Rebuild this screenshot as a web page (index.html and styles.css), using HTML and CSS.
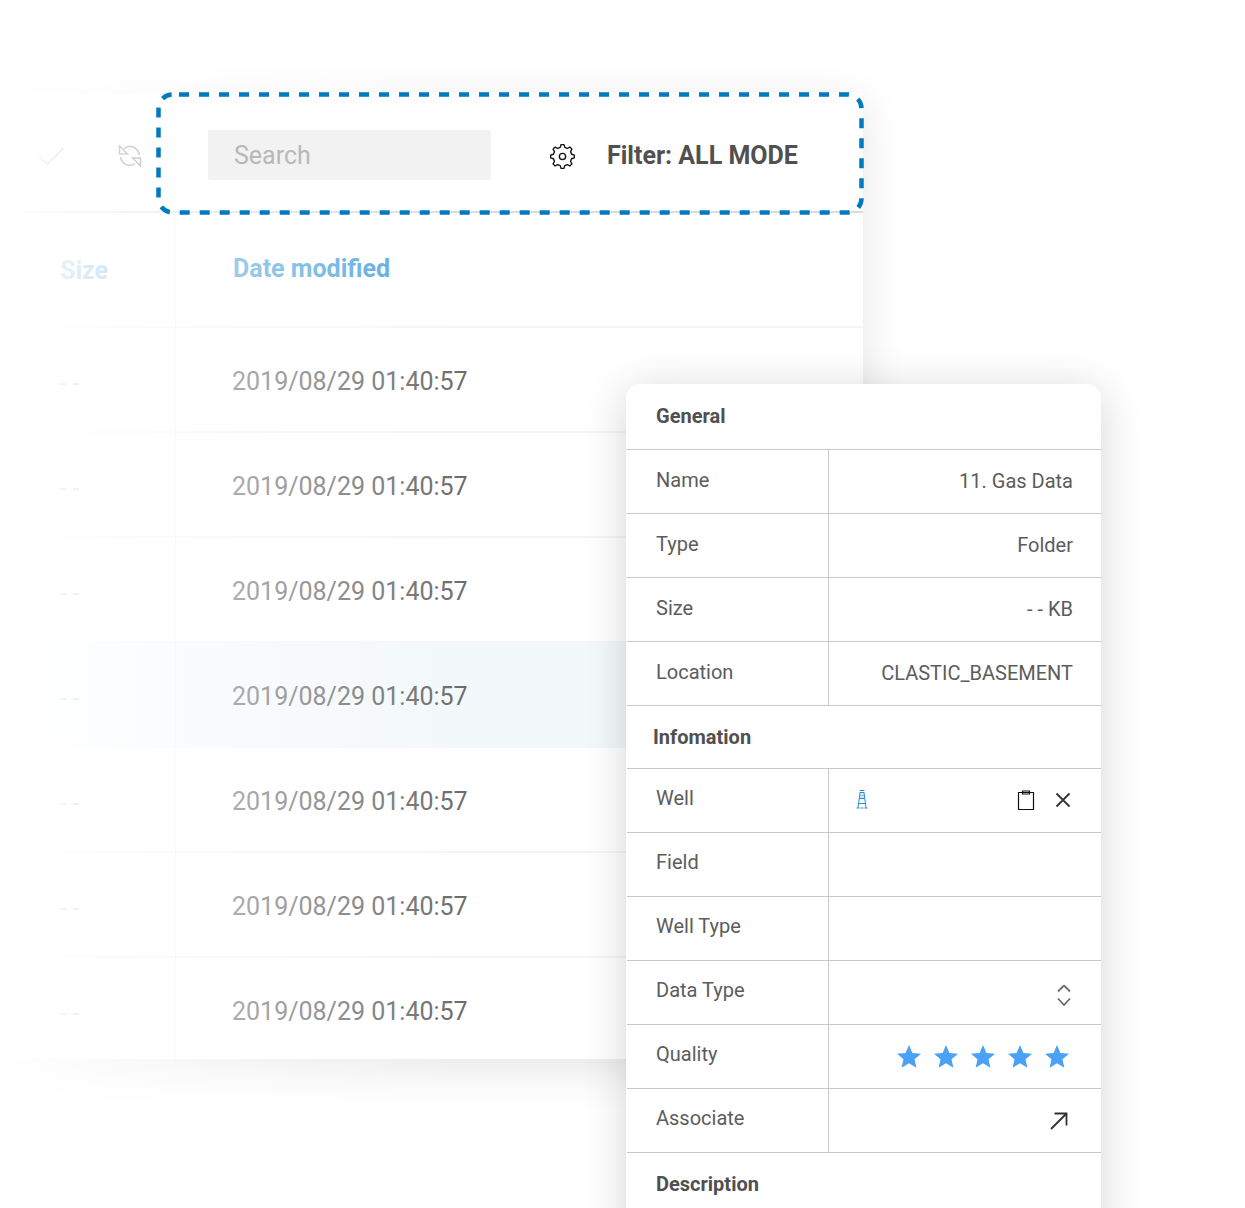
FILE: index.html
```html
<!DOCTYPE html>
<html lang="en">
<head>
<meta charset="utf-8">
<title>File details</title>
<link rel="stylesheet" href="styles.css">
</head>
<body>
<div class="stage">
  <section class="card">
    <div class="toolbar">
      <svg class="ico-check" width="28" height="20" viewBox="0 0 28 20"><path d="M3.300 9.700l8 7.600 16-16"/></svg>
      <svg class="ico-refresh" width="24" height="24" viewBox="0 0 24 24"><path d="M6 4.800C11 .5 19 1.500 21.500 11M2.500 13C4 20 11 24 17 19.500"/><path d="M1.500 2v8h8zM22.500 22v-8h-8z"/></svg>
      <div class="search">Search</div>
      <svg class="ico-gear" width="25" height="25" viewBox="0 0 24 24"><polygon points="9.82,3.27 10.6,.59 13.4,.59 14.18,3.27 16.64,4.29 19.08,2.94 21.06,4.92 19.71,7.36 20.73,9.82 23.41,10.6 23.41,13.4 20.73,14.18 19.71,16.64 21.06,19.08 19.08,21.06 16.64,19.71 14.18,20.73 13.4,23.41 10.6,23.41 9.82,20.73 7.36,19.71 4.92,21.06 2.94,19.08 4.29,16.64 3.27,14.18 .59,13.4 .59,10.6 3.27,9.82 4.29,7.36 2.94,4.92 4.92,2.94 7.36,4.29"/><circle cx="12" cy="12" r="3"/></svg>
      <div class="filter">Filter: ALL MODE</div>
    </div>
    <div class="row head"><div class="c-size"><span class="size-title">Size</span></div><div class="c-date date-title">Date modified</div></div>
    <div class="row"><div class="c-size dash">- -</div><div class="c-date">2019/08/29 01:40:57</div></div>
    <div class="row"><div class="c-size dash">- -</div><div class="c-date">2019/08/29 01:40:57</div></div>
    <div class="row"><div class="c-size dash">- -</div><div class="c-date">2019/08/29 01:40:57</div></div>
    <div class="row selected"><div class="c-size dash">- -</div><div class="c-date">2019/08/29 01:40:57</div></div>
    <div class="row"><div class="c-size dash">- -</div><div class="c-date">2019/08/29 01:40:57</div></div>
    <div class="row"><div class="c-size dash">- -</div><div class="c-date">2019/08/29 01:40:57</div></div>
    <div class="row last"><div class="c-size dash">- -</div><div class="c-date">2019/08/29 01:40:57</div></div>
  </section>

  <div class="fade"></div>

  <svg class="marquee" width="720" height="136" viewBox="0 0 720 136"><rect x="6.500" y="6.500" width="703" height="118" rx="14"/></svg>

  <aside class="panel">
    <h3 class="section first">General</h3>
    <div class="prop"><div class="k">Name</div><div class="v">11. Gas Data</div></div>
    <div class="prop"><div class="k">Type</div><div class="v">Folder</div></div>
    <div class="prop"><div class="k">Size</div><div class="v">- - KB</div></div>
    <div class="prop"><div class="k">Location</div><div class="v">CLASTIC_BASEMENT</div></div>
    <h3 class="section info">Infomation</h3>
    <div class="group-info">
      <div class="prop"><div class="k">Well</div><div class="v well">
        <svg class="ico-derrick" width="12" height="20" viewBox="0 0 12 20"><path class="d-soft" d="M5 4.500v5M7 4.500v5M3.800 6.500h4.400"/><path d="M3.500 1.500h5M3.800 3.500h4.400M4 3.500L2 19M8 3.500L10 19M3.300 9.500h5.400M2.700 14.500h6.600M.5 19h3M4.500 19h3M8.500 19h3"/></svg>
        <svg class="ico-clip" width="18" height="20" viewBox="0 0 18 20"><path d="M1.500 2.500h15v17h-15z"/><path d="M5.500 1h7v3h-7z"/></svg>
        <svg class="ico-x" width="16" height="16" viewBox="0 0 16 16"><path d="M1.500 1.500l13 13M14.500 1.500l-13 13"/></svg>
      </div></div>
      <div class="prop"><div class="k">Field</div><div class="v"></div></div>
      <div class="prop"><div class="k">Well Type</div><div class="v"></div></div>
      <div class="prop"><div class="k">Data Type</div><div class="v">
        <svg class="ico-updown" width="14" height="21" viewBox="0 0 14 21"><path d="M1 6.500l6-6 6 6M1 13.500l6 6.500 6-6.500"/></svg>
      </div></div>
      <div class="prop"><div class="k">Quality</div><div class="v stars">
        <svg width="24" height="23" viewBox="0 0 24 23"><polygon points="12,0 15.400,8 24,8.700 17.500,14.300 19.400,22.700 12,18.300 4.600,22.700 6.500,14.300 0,8.700 8.600,8"/></svg>
        <svg width="24" height="23" viewBox="0 0 24 23"><polygon points="12,0 15.400,8 24,8.700 17.500,14.300 19.400,22.700 12,18.300 4.600,22.700 6.500,14.300 0,8.700 8.600,8"/></svg>
        <svg width="24" height="23" viewBox="0 0 24 23"><polygon points="12,0 15.400,8 24,8.700 17.500,14.300 19.400,22.700 12,18.300 4.600,22.700 6.500,14.300 0,8.700 8.600,8"/></svg>
        <svg width="24" height="23" viewBox="0 0 24 23"><polygon points="12,0 15.400,8 24,8.700 17.500,14.300 19.400,22.700 12,18.300 4.600,22.700 6.500,14.300 0,8.700 8.600,8"/></svg>
        <svg width="24" height="23" viewBox="0 0 24 23"><polygon points="12,0 15.400,8 24,8.700 17.500,14.300 19.400,22.700 12,18.300 4.600,22.700 6.500,14.300 0,8.700 8.600,8"/></svg>
      </div></div>
      <div class="prop"><div class="k">Associate</div><div class="v">
        <svg class="ico-arrow" width="18" height="18" viewBox="0 0 18 18"><path d="M1 17L16.500 1.500M4.500 1.500h12v12"/></svg>
      </div></div>
    </div>
    <h3 class="section">Description</h3>
  </aside>
</div>
</body>
</html>
```

FILE: styles.css
```css
* { box-sizing: border-box; }
html, body { margin: 0; padding: 0; background: #fff; }
body { font-family: Roboto, "Liberation Sans", sans-serif; color: #555; }

.stage { position: relative; width: 1245px; height: 1208px; overflow: hidden; padding-top: 93px; }

/* background table card */
.card { margin-left: -60px; width: 923px; background: #fff; box-shadow: 0 10px 40px rgba(0,0,0,.11); }
.toolbar { height: 120px; display: flex; align-items: center; border-bottom: 2px solid #dcdcdc; padding: 7px 0 0 96px; }
.ico-check { fill: none; stroke: #777; stroke-width: 1.500; margin-top: 3px; }
.ico-refresh { margin-left: 54px; fill: none; stroke: #6a6a6a; stroke-width: 1.500; }
.search { position: relative; z-index: 1; margin: -2px 0 0 66px; width: 283px; height: 50px; background: #f2f2f2; border-radius: 2px; padding: 1px 0 0 26px; font-size: 25px; line-height: 50px; color: #b8b8b8; }
.ico-gear { margin-left: 59px; margin-top: 2px; fill: none; stroke: #111; stroke-width: 1.300; stroke-linejoin: round; position: relative; z-index: 1; }
.filter { margin-left: 32px; font-size: 25px; font-weight: 700; color: #505050; margin-top: -1px; white-space: nowrap; }

.row { display: grid; grid-template-columns: 236px 1fr; height: 105px; border-bottom: 2px solid #f5f5f5; font-size: 25px; color: #666; }
.row.head { height: 115px; }
.row.selected { background: #f3f8fb; border-bottom-color: #f3f8fb; }
.row.last { height: 101px; border-bottom: 0; }
.c-size { display: flex; align-items: center; padding: 4px 0 0 120px; border-right: 1px solid #f0f0f0; margin-bottom: -2px; }
.c-date { display: flex; align-items: center; padding: 4px 0 0 56px; color: #6a6a6a; }
.row.last .c-date { padding-top: 6px; }
.dash { font-size: 24px; color: #a8a8a8; padding-top: 5px; }
.row.last .dash { padding-top: 7px; }
.size-title { font-weight: 700; color: #4ea3dc; margin-top: -4px; }
.head .c-date { padding-top: 0; padding-left: 57px; padding-bottom: 2px; }
.date-title { font-weight: 700; color: #4ea3dc; }

/* white wash over the left side of the card */
.fade { position: absolute; left: 0; top: 0; width: 480px; height: 1130px; pointer-events: none;
  background: linear-gradient(90deg, rgba(255,255,255,1) 0, rgba(255,255,255,.86) 60px, rgba(255,255,255,.45) 233px, rgba(255,255,255,0) 470px); }

/* dashed selection frame */
.marquee { position: absolute; left: 152px; top: 88px; fill: none; stroke: #0079c1; stroke-width: 4.500; stroke-dasharray: 10 10; stroke-dashoffset: -6.500; }

/* details panel */
.panel { position: absolute; left: 626px; top: 384px; width: 475px; height: 900px; padding-left: 1px; background: #fff; border-radius: 14px; box-shadow: 0 6px 44px rgba(0,0,0,.17); font-size: 20px; color: #5c5c5c; }
.section { margin: 0; height: 64px; display: flex; align-items: center; padding: 0 0 2px 29px; font-size: 20px; font-weight: 700; color: #505050; border-bottom: 1px solid #c9c9c9; }
.section.first { height: 66px; }
.section.info { padding: 0 0 0 26px; height: 63px; }
.prop { display: grid; grid-template-columns: 202px 1fr; height: 64px; border-bottom: 1px solid #c9c9c9; }
.k { display: flex; align-items: center; padding: 0 0 3px 29px; border-right: 1px solid #c9c9c9; }
.group-info .k { padding-bottom: 5px; }
.v { display: flex; align-items: center; justify-content: flex-end; padding: 0 28px 1px 0; }

.well { justify-content: flex-start; padding-left: 27px; }
.ico-derrick { fill: none; stroke: #2a8ccc; stroke-width: 1; margin-top: -2px; }
.d-soft { stroke: #9ccbe8; }
.ico-clip { margin-left: auto; margin-right: 20px; fill: none; stroke: #111; stroke-width: 1.200; }
.ico-x { margin-right: 2px; fill: none; stroke: #333; stroke-width: 1.800; }
.ico-updown { margin: 6px 1.700px 0 0; fill: none; stroke: #6e6e6e; stroke-width: 1.800; }
.stars { gap: 13px; padding-right: 32px; }
.stars svg { fill: #4aa1f5; }
.ico-arrow { margin: 1px 5px 0 0; fill: none; stroke: #333; stroke-width: 1.800; }
```
